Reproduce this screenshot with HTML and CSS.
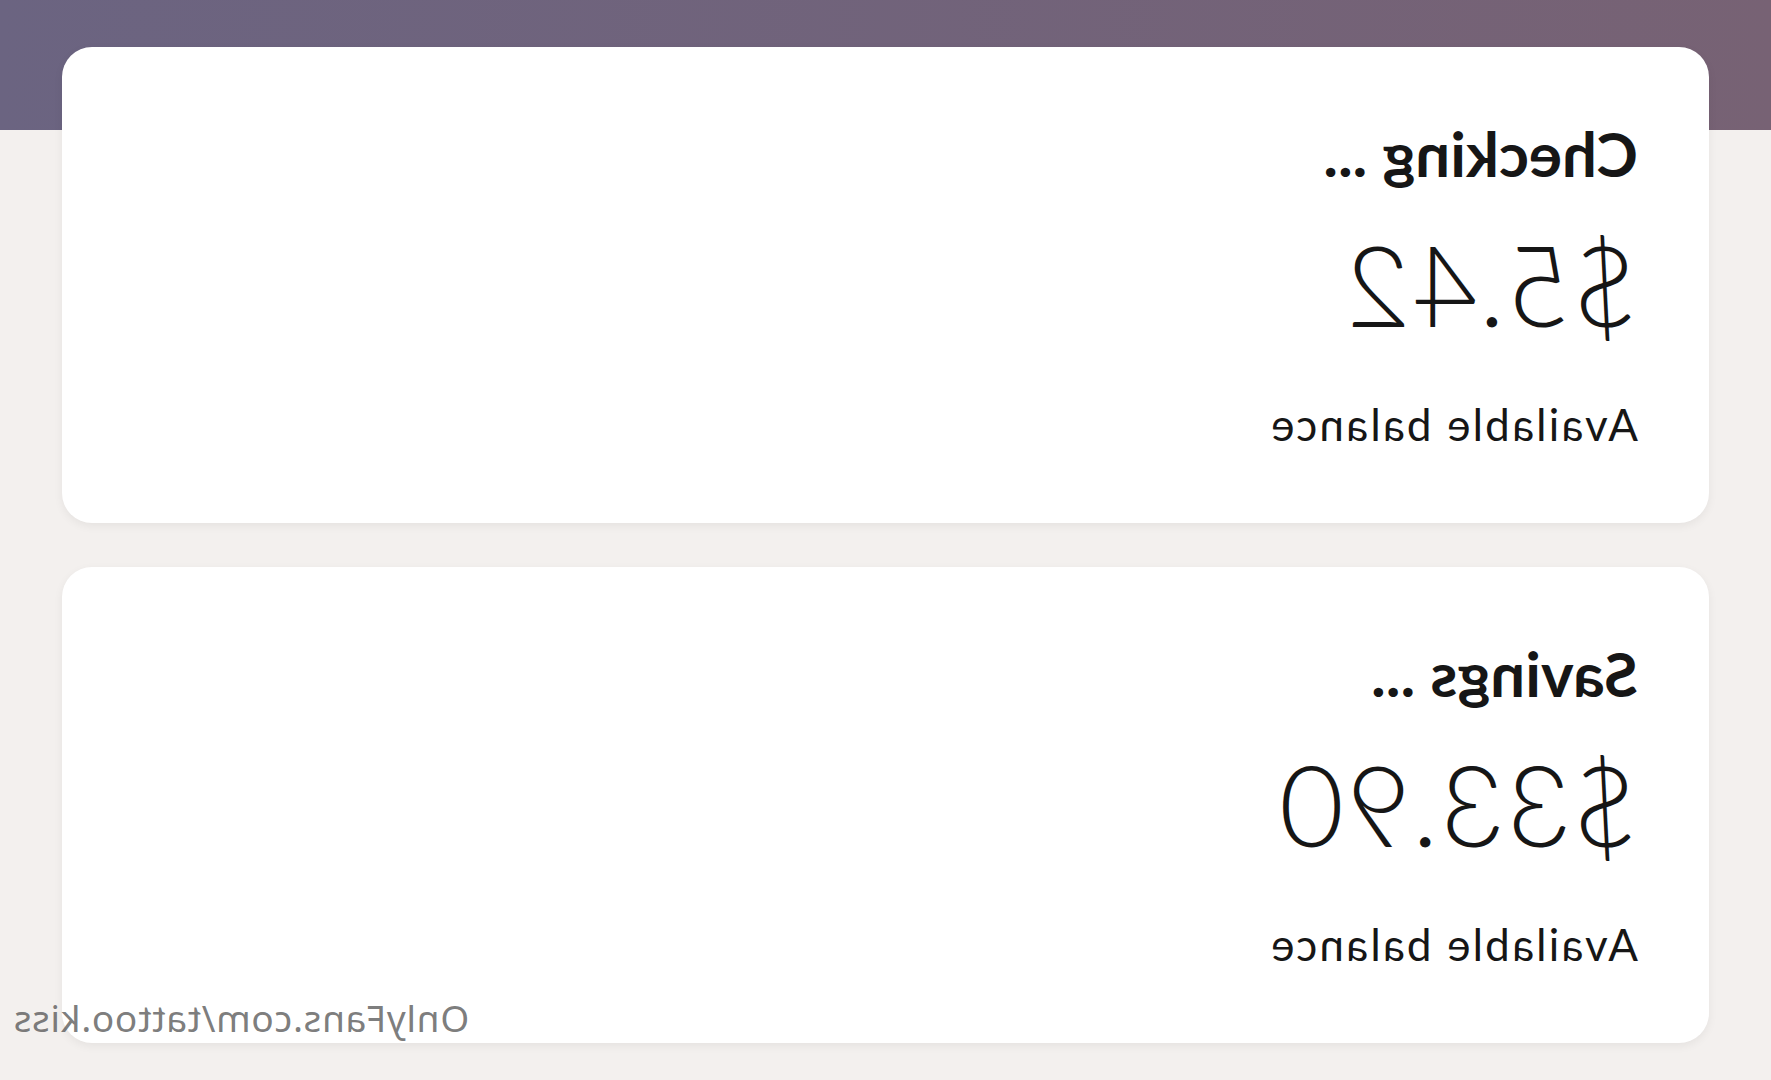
FILE: index.html
```html
<!DOCTYPE html>
<html lang="en">
<head>
  <meta charset="UTF-8">
  <meta name="viewport" content="width=device-width, initial-scale=1.0">
  <title>Accounts</title>
  <link rel="stylesheet" href="styles.css">
</head>
<body>
  <div class="page">
    <div class="account">
      <div class="account-name">Checking ...</div>
      <div class="account-amount">$5.42</div>
      <div class="account-label">Available balance</div>
    </div>

    <div class="account">
      <div class="account-name">Savings ...</div>
      <div class="account-amount">$33.90</div>
      <div class="account-label">Available balance</div>
    </div>

    <div class="watermark">OnlyFans.com/tattoo.kiss</div>
  </div>
</body>
</html>
```

FILE: styles.css
```css
body {
  margin: 0;
  font-family: Lato, "Noto Sans", sans-serif;
  background-color: #f3f0ee;
  color: #161616;
}
.page {
  position: relative;
  min-height: 1080px;
  box-sizing: border-box;
  padding: 47px 62px 0;
  display: flex;
  flex-direction: column;
  gap: 44px;
  background:
    linear-gradient(to right, #776274, #6b6481) top / 100% 130px no-repeat,
    #f3f0ee;
  transform: scaleX(-1);
  overflow: hidden;
}
.account {
  background-color: white;
  border-radius: 30px;
  padding: 75px 71px 77px;
  box-shadow: 0 3px 10px rgba(0, 0, 0, 0.06);
}
.account-name {
  font-size: 62px;
  line-height: 62px;
  font-weight: 700;
}
.account-amount {
  font-size: 112px;
  line-height: 112px;
  font-weight: 300;
  letter-spacing: 1.6px;
  margin-top: 44px;
}
.account-label {
  font-size: 44px;
  line-height: 44px;
  letter-spacing: 2.2px;
  margin-top: 62px;
}
.watermark {
  position: absolute;
  right: 13px;
  top: 996px;
  font-family: "Noto Sans", sans-serif;
  font-size: 37px;
  line-height: 44px;
  letter-spacing: 0.7px;
  color: rgba(90, 90, 90, 0.8);
}
```
